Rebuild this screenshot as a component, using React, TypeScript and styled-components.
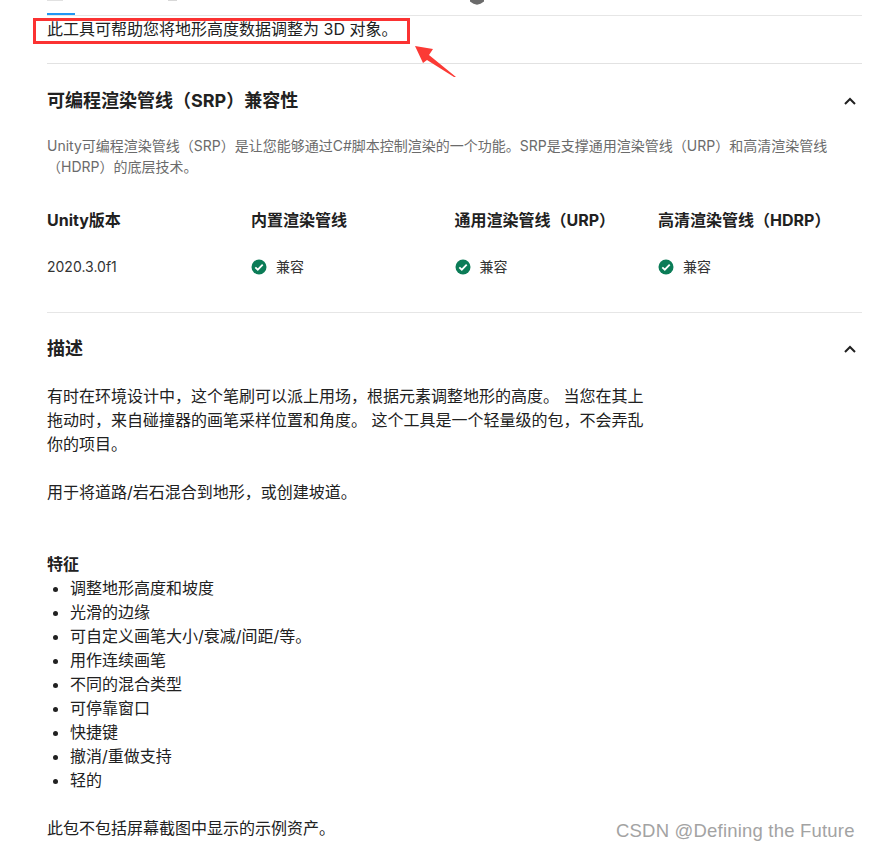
import React from "react";
import styled, { createGlobalStyle } from "styled-components";

const Global = createGlobalStyle`
  html, body { margin: 0; padding: 0; background: #fff; }
  body { font-family: Inter, "Noto Sans CJK SC", sans-serif; color: #212121; width: 869px; height: 850px; overflow: hidden; }
`;
const Page = styled.div`position: relative; width: 869px; height: 850px; overflow: hidden; background: #fff;`;
const TabBar = styled.div`height: 15px; margin-left: 47px; width: 815px; border-bottom: 1px solid #e6e6e6; box-sizing: content-box; display: flex; align-items: flex-end;`;
const ActiveTab = styled.div`width: 28px; height: 2px; background: #2196f3;`;
const Content = styled.main`margin-left: 47px; width: 815px;`;
const Intro = styled.p`margin: 0; height: 48px; padding-top: 2px; box-sizing: border-box; font-size: 16px; line-height: 22px; color: #212121; border-bottom: 1px solid #e2e2e2;`;
const Section = styled.section`height: 249px; border-bottom: 1px solid #e6e6e6; box-sizing: border-box;`;
const Head = styled.div<{ $h: number }>`display: flex; justify-content: space-between; align-items: center; height: ${p => p.$h}px;`;
const Title = styled.h2`margin: 0; font-size: 18px; font-weight: 700; line-height: 24px; color: #212121;`;
const Chevron = styled.svg`width: 12px; height: 8px; margin-right: 6px; fill: none; stroke: #212121; stroke-width: 2;`;
const Note = styled.p`margin: -2px 0 0; width: 790px; font-size: 14px; line-height: 21px; color: #6b6b6b;`;
const Table = styled.div`display: grid; grid-template-columns: 204px 203.5px 203.5px 204px; margin-top: 31px;`;
const Th = styled.div`font-size: 16px; font-weight: 700; line-height: 24px; height: 48px; white-space: nowrap; color: #212121;`;
const Td = styled.div`display: flex; align-items: center; gap: 9px; font-size: 14px; line-height: 22px; color: #333; height: 22px;`;
const Body = styled.div`width: 600px; font-size: 16px; line-height: 24px; color: #212121;`;
const Para = styled.p<{ $after?: number }>`margin: 0 0 ${p => p.$after ?? 0}px;`;
const Strong = styled.div`font-weight: 700;`;
const List = styled.ul`margin: 0 0 24px; padding: 0 0 0 23px; list-style: disc;`;
const Mark = styled.div`position: absolute; left: 33px; top: 18px; width: 377px; height: 26px; box-sizing: border-box; border: 3px solid #fb3232;`;
const ArrowSvg = styled.svg`position: absolute; left: 412px; top: 42px; width: 48px; height: 38px;`;
const TopGlyphs = styled.svg`position: absolute; left: 0; top: 0; width: 500px; height: 5px;`;
const Watermark = styled.div`position: absolute; left: 616px; top: 819px; font-family: "Liberation Sans", sans-serif; font-size: 18.5px; line-height: 24px; color: #a3a3a3; letter-spacing: .2px; white-space: nowrap;`;

const Check = () => (
  <svg width="16" height="16" viewBox="0 0 16 16">
    <circle cx="8" cy="8" r="7.500" fill="#0b7c57" />
    <path d="M4.300 8.300l2.500 2.400 4.900-5" fill="none" stroke="#fff" strokeWidth="1.800" />
  </svg>
);
const Up = () => <Chevron viewBox="0 0 12 8"><path d="M1 7l5-5 5 5" /></Chevron>;
const features = ["调整地形高度和坡度", "光滑的边缘", "可自定义画笔大小/衰减/间距/等。", "用作连续画笔", "不同的混合类型", "可停靠窗口", "快捷键", "撤消/重做支持", "轻的"];

export default function App() {
  return (
    <Page>
      <Global />
      <TopGlyphs viewBox="0 0 500 5">
        <path d="M47 0h16v.800h-16zM168 0h9v1h-9z" fill="#d8d8d8" />
        <path d="M470 0h14v1.500l-3.500 2.300-3.500 1-3.500-1-3.500-2.300z" fill="#6b6b6b" />
      </TopGlyphs>
      <TabBar><ActiveTab /></TabBar>
      <Content>
        <Intro>此工具可帮助您将地形高度数据调整为 3D 对象。</Intro>
        <Section>
          <Head $h={73}><Title>可编程渲染管线（SRP）兼容性</Title><Up /></Head>
          <Note>Unity可编程渲染管线（SRP）是让您能够通过C#脚本控制渲染的一个功能。SRP是支撑通用渲染管线（URP）和高清渲染管线（HDRP）的底层技术。</Note>
          <Table>
            <Th>Unity版本</Th><Th>内置渲染管线</Th><Th>通用渲染管线（URP）</Th><Th>高清渲染管线（HDRP）</Th>
            <Td>2020.3.0f1</Td>
            <Td><Check />兼容</Td><Td><Check />兼容</Td><Td><Check />兼容</Td>
          </Table>
        </Section>
        <Head $h={71}><Title>描述</Title><Up /></Head>
        <Body>
          <Para $after={24}>有时在环境设计中，这个笔刷可以派上用场，根据元素调整地形的高度。 当您在其上拖动时，来自碰撞器的画笔采样位置和角度。 这个工具是一个轻量级的包，不会弄乱你的项目。</Para>
          <Para $after={48}>用于将道路/岩石混合到地形，或创建坡道。</Para>
          <Strong>特征</Strong>
          <List>{features.map(f => <li key={f}>{f}</li>)}</List>
          <Para>此包不包括屏幕截图中显示的示例资产。</Para>
        </Body>
      </Content>
      <Mark />
      <ArrowSvg viewBox="0 0 48 38"><path d="M3 4L21 7L17 13L44 35L42 35L15 18L11 21Z" fill="#fb3a35" /></ArrowSvg>
      <Watermark>CSDN @Defining the Future</Watermark>
    </Page>
  );
}
